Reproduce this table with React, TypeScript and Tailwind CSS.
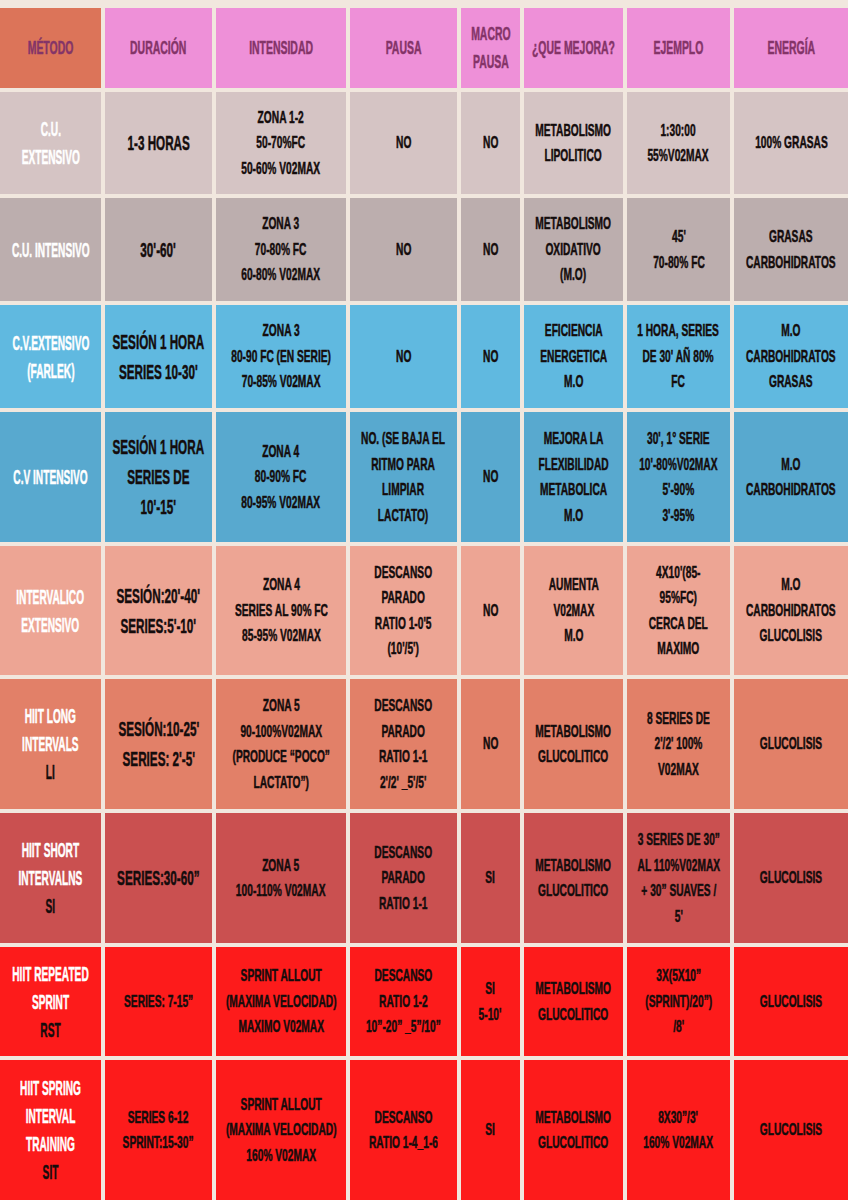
type Row = {
  bg: string;
  metodo: string[];
  darkLast?: boolean;
  duracion: string[];
  bigDuracion?: boolean;
  rest: string[][];
};

const rows: Row[] = [
  {
    bg: "bg-[#d5c4c4]",
    metodo: ["C.U.", "EXTENSIVO"],
    duracion: ["1-3 HORAS"],
    bigDuracion: true,
    rest: [
      ["ZONA 1-2", "50-70%FC", "50-60% V02MAX"],
      ["NO"],
      ["NO"],
      ["METABOLISMO", "LIPOLITICO"],
      ["1:30:00", "55%V02MAX"],
      ["100% GRASAS"],
    ],
  },
  {
    bg: "bg-[#bcaeae]",
    metodo: ["C.U. INTENSIVO"],
    duracion: ["30'-60'"],
    bigDuracion: true,
    rest: [
      ["ZONA 3", "70-80% FC", "60-80% V02MAX"],
      ["NO"],
      ["NO"],
      ["METABOLISMO", "OXIDATIVO", "(M.O)"],
      ["45'", "70-80% FC"],
      ["GRASAS", "CARBOHIDRATOS"],
    ],
  },
  {
    bg: "bg-[#60b9e0]",
    metodo: ["C.V.EXTENSIVO", "(FARLEK)"],
    duracion: ["SESIÓN 1 HORA", "SERIES 10-30'"],
    bigDuracion: true,
    rest: [
      ["ZONA 3", "80-90 FC (EN SERIE)", "70-85% V02MAX"],
      ["NO"],
      ["NO"],
      ["EFICIENCIA", "ENERGETICA", "M.O"],
      ["1 HORA, SERIES", "DE 30' AÑ 80%", "FC"],
      ["M.O", "CARBOHIDRATOS", "GRASAS"],
    ],
  },
  {
    bg: "bg-[#58a9cf]",
    metodo: ["C.V INTENSIVO"],
    duracion: ["SESIÓN 1 HORA", "SERIES DE", "10'-15'"],
    bigDuracion: true,
    rest: [
      ["ZONA 4", "80-90% FC", "80-95% V02MAX"],
      ["NO. (SE BAJA EL", "RITMO PARA", "LIMPIAR", "LACTATO)"],
      ["NO"],
      ["MEJORA LA", "FLEXIBILIDAD", "METABOLICA", "M.O"],
      ["30', 1° SERIE", "10'-80%V02MAX", "5'-90%", "3'-95%"],
      ["M.O", "CARBOHIDRATOS"],
    ],
  },
  {
    bg: "bg-[#eda594]",
    metodo: ["INTERVALICO", "EXTENSIVO"],
    duracion: ["SESIÓN:20'-40'", "SERIES:5'-10'"],
    bigDuracion: true,
    rest: [
      ["ZONA 4", "SERIES AL 90% FC", "85-95% V02MAX"],
      ["DESCANSO", "PARADO", "RATIO 1-0'5", "(10'/5')"],
      ["NO"],
      ["AUMENTA", "V02MAX", "M.O"],
      ["4X10'(85-", "95%FC)", "CERCA DEL", "MAXIMO"],
      ["M.O", "CARBOHIDRATOS", "GLUCOLISIS"],
    ],
  },
  {
    bg: "bg-[#e28068]",
    metodo: ["HIIT LONG", "INTERVALS", "LI"],
    darkLast: true,
    duracion: ["SESIÓN:10-25'", "SERIES: 2'-5'"],
    bigDuracion: true,
    rest: [
      ["ZONA 5", "90-100%V02MAX", "(PRODUCE “POCO”", "LACTATO”)"],
      ["DESCANSO", "PARADO", "RATIO 1-1", "2'/2' _5'/5'"],
      ["NO"],
      ["METABOLISMO", "GLUCOLITICO"],
      ["8 SERIES DE", "2'/2' 100%", "V02MAX"],
      ["GLUCOLISIS"],
    ],
  },
  {
    bg: "bg-[#ca5050]",
    metodo: ["HIIT SHORT", "INTERVALNS", "SI"],
    darkLast: true,
    duracion: ["SERIES:30-60”"],
    bigDuracion: true,
    rest: [
      ["ZONA 5", "100-110% V02MAX"],
      ["DESCANSO", "PARADO", "RATIO 1-1"],
      ["SI"],
      ["METABOLISMO", "GLUCOLITICO"],
      ["3 SERIES DE 30”", "AL 110%V02MAX", "+ 30” SUAVES /", "5'"],
      ["GLUCOLISIS"],
    ],
  },
  {
    bg: "bg-[#fd1b1b]",
    metodo: ["HIIT REPEATED", "SPRINT", "RST"],
    darkLast: true,
    duracion: ["SERIES: 7-15”"],
    rest: [
      ["SPRINT ALLOUT", "(MAXIMA VELOCIDAD)", "MAXIMO V02MAX"],
      ["DESCANSO", "RATIO 1-2", "10”-20” _5”/10”"],
      ["SI", "5-10'"],
      ["METABOLISMO", "GLUCOLITICO"],
      ["3X(5X10”", "(SPRINT)/20”)", "/8'"],
      ["GLUCOLISIS"],
    ],
  },
  {
    bg: "bg-[#fd1b1b]",
    metodo: ["HIIT SPRING", "INTERVAL", "TRAINING", "SIT"],
    darkLast: true,
    duracion: ["SERIES 6-12", "SPRINT:15-30”"],
    rest: [
      ["SPRINT ALLOUT", "(MAXIMA VELOCIDAD)", "160% V02MAX"],
      ["DESCANSO", "RATIO 1-4_1-6"],
      ["SI"],
      ["METABOLISMO", "GLUCOLITICO"],
      ["8X30”/3'", "160% V02MAX"],
      ["GLUCOLISIS"],
    ],
  },
];

const headers = [
  ["DURACIÓN"],
  ["INTENSIDAD"],
  ["PAUSA"],
  ["MACRO", "PAUSA"],
  ["¿QUE MEJORA?"],
  ["EJEMPLO"],
  ["ENERGÍA"],
];

function Lines({ lines }: { lines: string[] }) {
  return (
    <div className="scale-x-[0.6] whitespace-nowrap text-center text-[17px] leading-[25.5px] font-bold text-[#140c0c] [-webkit-text-stroke:0.5px_currentColor]">
      {lines.map((l, i) => (
        <div key={i}>{l}</div>
      ))}
    </div>
  );
}

export default function App() {
  return (
    <div className="min-h-[1200px] w-[848px] overflow-hidden bg-[#f1e7de] pt-2 font-['Liberation_Sans',Arial,sans-serif]">
      <div className="grid grid-cols-[101px_107px_130px_107px_59px_99px_103px_114px] grid-rows-[80px_102px_103px_103px_130px_129px_130px_130px_109px_140px] gap-1">
        {/* HEADER */}
        <div className="flex items-center justify-center overflow-hidden bg-[#dc7459]">
          <div className="scale-x-[0.55] whitespace-nowrap text-[19px] font-bold text-[#843468] [-webkit-text-stroke:0.5px_currentColor]">
            MÉTODO
          </div>
        </div>
        {headers.map((h, i) => (
          <div
            key={i}
            className="flex items-center justify-center overflow-hidden bg-[#ee90d8]"
          >
            <div className="scale-x-[0.55] whitespace-nowrap text-center text-[19px] leading-[28px] font-bold text-[#843468] [-webkit-text-stroke:0.5px_currentColor]">
              {h.map((l, j) => (
                <div key={j}>{l}</div>
              ))}
            </div>
          </div>
        ))}

        {/* ROWS */}
        {rows.map((row, r) => (
          <div key={r} className="contents">
            <div className={`flex items-center justify-center overflow-hidden ${row.bg}`}>
              <div className="scale-x-[0.52] whitespace-nowrap text-center text-[19.5px] leading-[28px] font-bold [-webkit-text-stroke:0.5px_currentColor]">
                {row.metodo.map((l, j) => (
                  <div
                    key={j}
                    className={
                      row.darkLast && j === row.metodo.length - 1
                        ? "text-[#140c0c]"
                        : "text-white"
                    }
                  >
                    {l}
                  </div>
                ))}
              </div>
            </div>
            <div className={`flex items-center justify-center overflow-hidden ${row.bg}`}>
              {row.bigDuracion ? (
                <div className="scale-x-[0.57] whitespace-nowrap text-center text-[20.5px] leading-[30px] font-bold text-[#140c0c] [-webkit-text-stroke:0.5px_currentColor]">
                  {row.duracion.map((l, j) => (
                    <div key={j}>{l}</div>
                  ))}
                </div>
              ) : (
                <Lines lines={row.duracion} />
              )}
            </div>
            {row.rest.map((cell, c) => (
              <div
                key={c}
                className={`flex items-center justify-center overflow-hidden ${row.bg}`}
              >
                <Lines lines={cell} />
              </div>
            ))}
          </div>
        ))}
      </div>
    </div>
  );
}
